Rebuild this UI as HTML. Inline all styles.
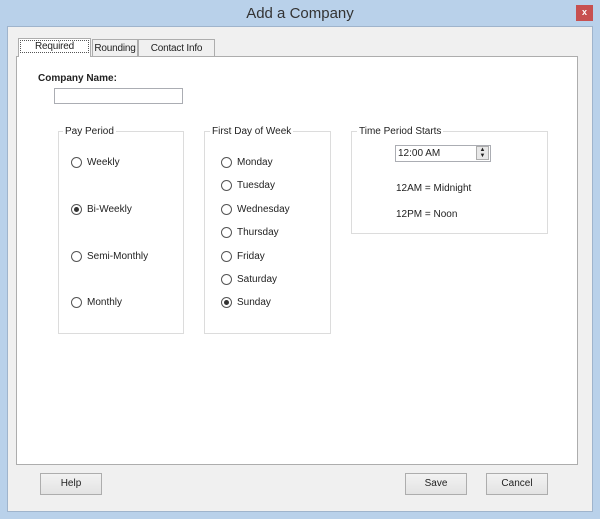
<!DOCTYPE html>
<html><head><style>
body{margin:0;width:600px;height:519px;background:#b9d1ea;font-family:"Liberation Sans",sans-serif;font-size:10px;color:#222;position:relative;overflow:hidden}
.a{position:absolute}
.client{left:7px;top:26px;width:586px;height:486px;background:#f0f0f0;border:1px solid #9fb4cc;box-sizing:border-box}
.panel{left:16px;top:56px;width:562px;height:409px;background:#fff;border:1px solid #adadad;box-sizing:border-box}
.grp{border:1px solid #dcdcdc;box-sizing:border-box}
.lg{background:#fff;padding:0 2px}
.rad{width:11px;height:11px;border:1px solid #555;border-radius:50%;box-sizing:border-box;background:#fff}
.dot{position:absolute;left:2px;top:2px;width:5px;height:5px;border-radius:50%;background:#333}
.btn{border:1px solid #adadad;background:linear-gradient(#f2f2f2,#e3e3e3);box-sizing:border-box;text-align:center;line-height:20px}
.tab{border:1px solid #adadad;border-bottom:none;background:#f0f0f0;box-sizing:border-box;text-align:center;line-height:17px;white-space:nowrap;letter-spacing:-0.2px}
</style></head><body>
<div class="a" style="left:0;top:0;width:600px;height:26px;text-align:center;line-height:27px;font-size:15px;color:#333">Add a Company</div>
<div class="a" style="left:576px;top:5px;width:17px;height:16px;background:#c75050;color:#fff;font-size:9px;text-align:center;line-height:15px;font-weight:bold">x</div>
<div class="a client"></div>
<div class="a panel"></div>
<div class="a tab" style="left:18px;top:38px;width:73px;height:19px;background:#fff;line-height:16px"><span style="border:1px dotted #555;padding:0 14px">Required</span></div>
<div class="a tab" style="left:92px;top:39px;width:46px;height:17px">Rounding</div>
<div class="a tab" style="left:138px;top:39px;width:77px;height:17px">Contact Info</div>
<div class="a" style="left:38px;top:73px;font-weight:bold">Company Name:</div>
<div class="a" style="left:54px;top:88px;width:129px;height:16px;border:1px solid #abadb3;box-sizing:border-box"></div>

<div class="a grp" style="left:58px;top:131px;width:126px;height:203px"></div>
<div class="a lg" style="left:63px;top:126px">Pay Period</div>
<div class="a rad" style="left:71px;top:157px"></div><div class="a" style="left:87px;top:157px">Weekly</div>
<div class="a rad" style="left:71px;top:204px"><div class="dot"></div></div><div class="a" style="left:87px;top:204px">Bi-Weekly</div>
<div class="a rad" style="left:71px;top:251px"></div><div class="a" style="left:87px;top:251px">Semi-Monthly</div>
<div class="a rad" style="left:71px;top:297px"></div><div class="a" style="left:87px;top:297px">Monthly</div>

<div class="a grp" style="left:204px;top:131px;width:127px;height:203px"></div>
<div class="a lg" style="left:210px;top:126px">First Day of Week</div>
<div class="a rad" style="left:221px;top:157px"></div><div class="a" style="left:237px;top:157px">Monday</div>
<div class="a rad" style="left:221px;top:180px"></div><div class="a" style="left:237px;top:180px">Tuesday</div>
<div class="a rad" style="left:221px;top:204px"></div><div class="a" style="left:237px;top:204px">Wednesday</div>
<div class="a rad" style="left:221px;top:227px"></div><div class="a" style="left:237px;top:227px">Thursday</div>
<div class="a rad" style="left:221px;top:251px"></div><div class="a" style="left:237px;top:251px">Friday</div>
<div class="a rad" style="left:221px;top:274px"></div><div class="a" style="left:237px;top:274px">Saturday</div>
<div class="a rad" style="left:221px;top:297px"><div class="dot"></div></div><div class="a" style="left:237px;top:297px">Sunday</div>

<div class="a grp" style="left:351px;top:131px;width:197px;height:103px"></div>
<div class="a lg" style="left:357px;top:126px">Time Period Starts</div>
<div class="a" style="left:395px;top:145px;width:96px;height:17px;border:1px solid #abadb3;box-sizing:border-box;padding:2px 2px;line-height:12px">12:00 AM</div>
<div class="a" style="left:476px;top:146px;width:13px;height:14px;border:1px solid #adadad;box-sizing:border-box;background:#e8e8e8;font-size:6px;line-height:6px;text-align:center">▲<br>▼</div>
<div class="a" style="left:396px;top:183px">12AM = Midnight</div>
<div class="a" style="left:396px;top:209px">12PM = Noon</div>

<div class="a btn" style="left:40px;top:473px;width:62px;height:22px">Help</div>
<div class="a btn" style="left:405px;top:473px;width:62px;height:22px">Save</div>
<div class="a btn" style="left:486px;top:473px;width:62px;height:22px">Cancel</div>
</body></html>
